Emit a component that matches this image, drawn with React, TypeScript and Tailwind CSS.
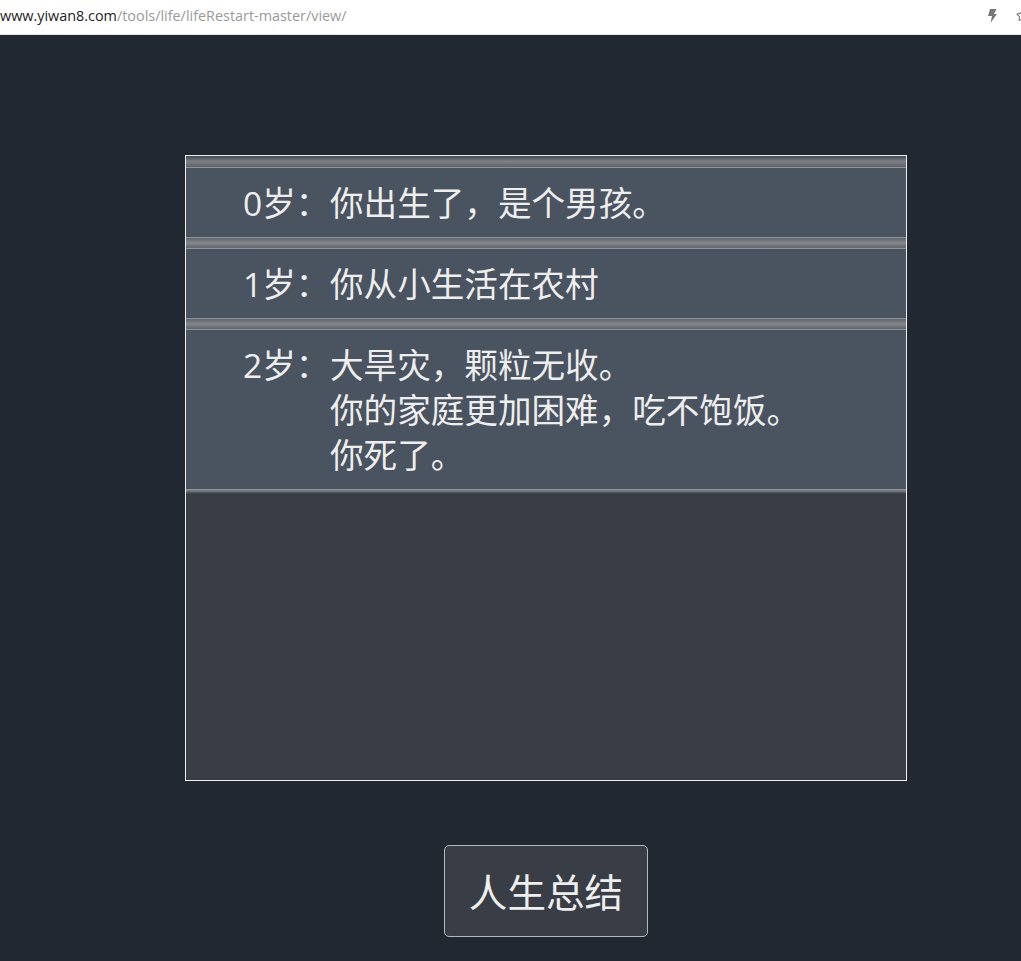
import { Star } from "lucide-react";

type Entry = {
  age: string;
  lines: string[];
};

const entries: Entry[] = [
  { age: "0岁：", lines: ["你出生了，是个男孩。"] },
  { age: "1岁：", lines: ["你从小生活在农村"] },
  { age: "2岁：", lines: ["大旱灾，颗粒无收。", "你的家庭更加困难，吃不饱饭。", "你死了。"] },
];

function Band() {
  return (
    <div className="h-[12px] border-y border-[#8f9296] bg-gradient-to-b from-[#60656d] via-[#85878a] to-[#5f646c]" />
  );
}

export default function App() {
  return (
    <div className="flex h-[961px] w-[1021px] flex-col overflow-hidden bg-[#222831] font-['Open_Sans','Noto_Sans_CJK_SC',sans-serif] text-[#eeeeee]">
      <div className="flex h-[35px] items-center justify-between border-b border-[#e4e4e4] bg-white pb-[3px] font-['Open_Sans','Liberation_Sans',sans-serif] text-[14.4px]">
        <p className="text-[#9a9a9a]">
          <span className="text-[#222222]">www.yiwan8.com</span>/tools/life/lifeRestart-master/view/
        </p>
        <div className="flex w-[33px] items-center gap-[19px] overflow-hidden text-[#777777]">
          <svg viewBox="0 0 9 14" className="h-[14px] w-[9px] shrink-0 fill-current">
            <path d="M2 0h6.5L6 5h3L2.5 14 4 7H0z" />
          </svg>
          <Star size={13} className="shrink-0" />
        </div>
      </div>

      <div className="ml-[185px] mt-[120px] h-[626px] w-[722px] border border-[#eeeeee] bg-[#393e46]">
        <div className="h-[12px] border-b border-[#8f9296] bg-gradient-to-b from-[#474c55] via-[#7d8084] to-[#5f646c]" />
        {entries.map((entry, i) => (
          <div key={entry.age}>
            <div className="flex bg-[#4a5360] pb-[11px] pl-[57px] pt-[13px] text-[33.6px] leading-[45px]">
              <span className="w-[87px] shrink-0">{entry.age}</span>
              <div>
                {entry.lines.map((line) => (
                  <p key={line}>{line}</p>
                ))}
              </div>
            </div>
            {i < entries.length - 1 ? (
              <Band />
            ) : (
              <div className="h-[5px] bg-gradient-to-b from-[#9a9c9f] to-[#393e46]" />
            )}
          </div>
        ))}
      </div>

      <button className="ml-[444px] mt-[64px] h-[92px] w-[204px] rounded-[5px] border border-[#b5b7ba] bg-[#393e46] pt-[4px] text-[38.6px]">
        人生总结
      </button>
    </div>
  );
}
